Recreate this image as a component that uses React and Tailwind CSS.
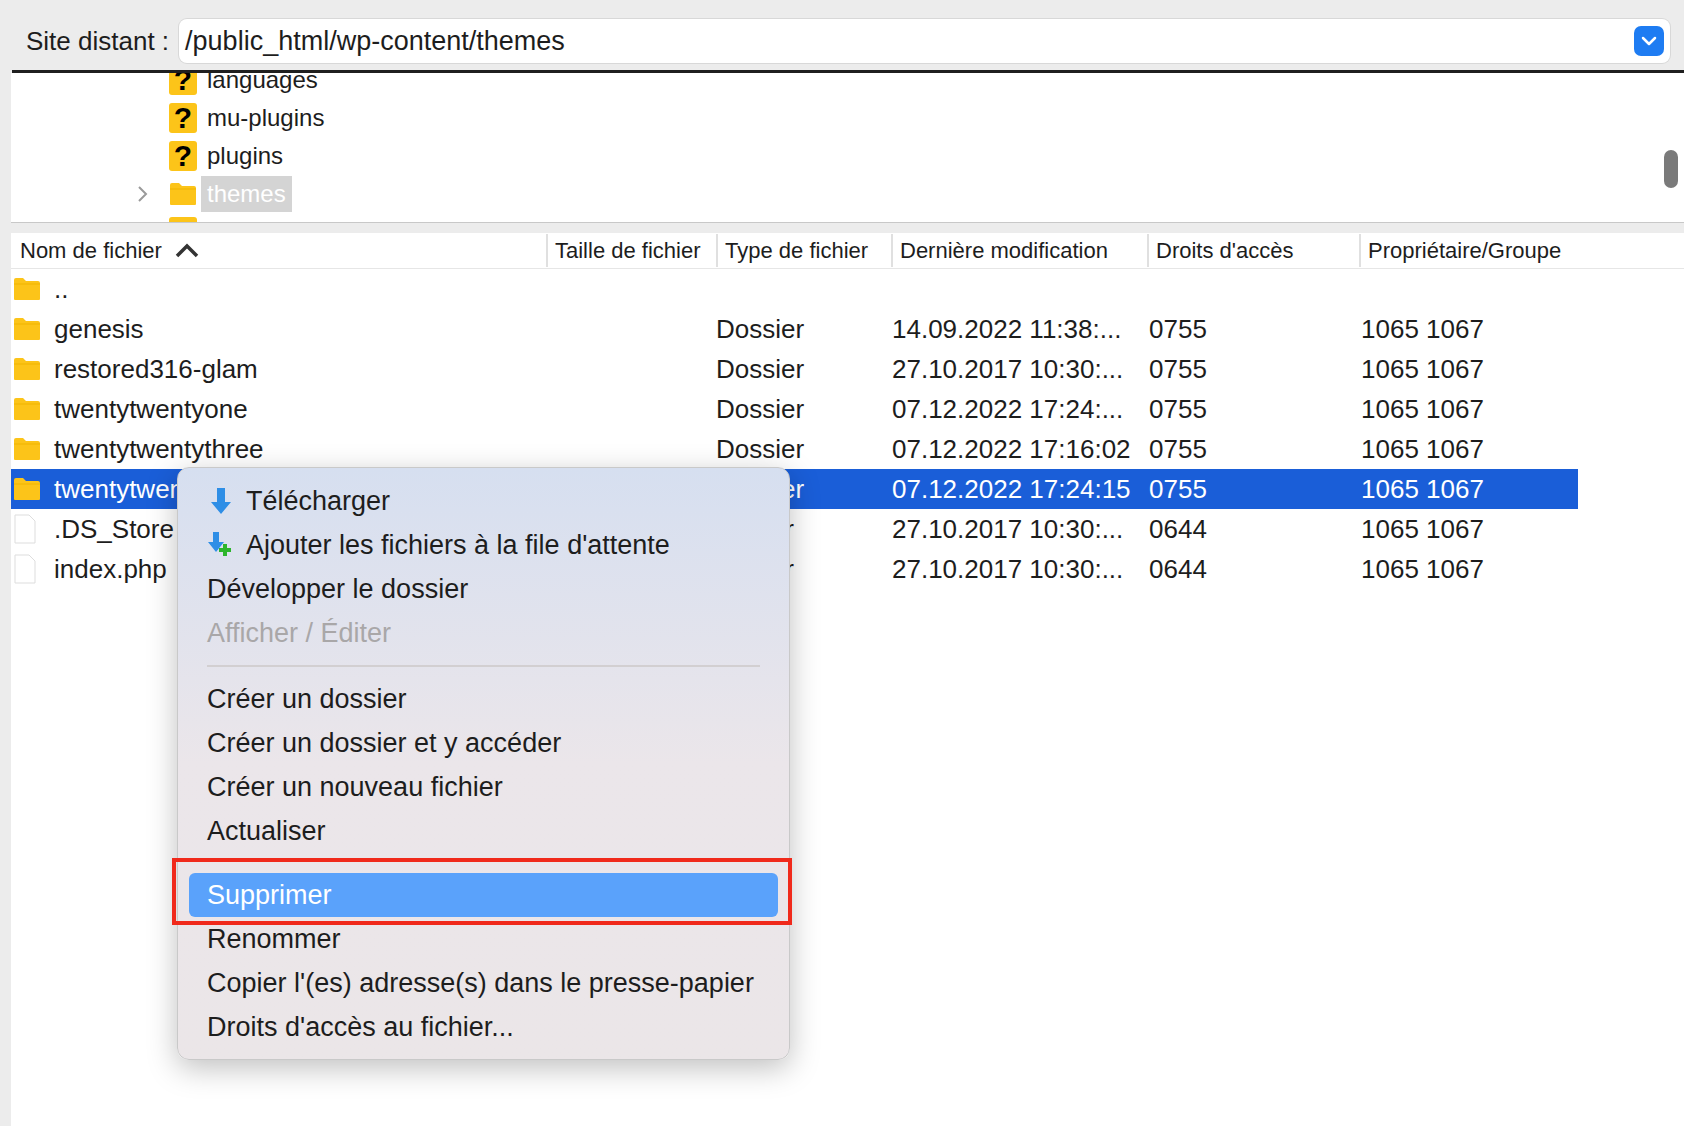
import React from 'react';

const font = { fontFamily: '"Liberation Sans", Arial, sans-serif' };

function Folder({ className = '' }) {
  return (
    <svg width="28" height="24" viewBox="0 0 28 24" className={className}>
      <path d="M1 3 Q1 1 3 1 H10 L13 4 H25 Q27 4 27 6 V22 Q27 23 26 23 H2 Q1 23 1 22 Z" fill="#fcc419" />
      <path d="M1 7 H27" stroke="#f0b400" strokeWidth="1" />
    </svg>
  );
}

function Unknown() {
  return (
    <div className="w-[28px] h-[30px] rounded-[3px] bg-[#fcc419] flex items-center justify-center text-black text-[30px] font-bold leading-none">?</div>
  );
}

function FileIcon() {
  return (
    <svg width="24" height="30" viewBox="0 0 24 30">
      <path d="M2 1 H16 L22 7 V29 H2 Z" fill="#fff" stroke="#ddd" />
    </svg>
  );
}

const rows = [
  { name: '..', icon: 'f' },
  { name: 'genesis', icon: 'f', type: 'Dossier', date: '14.09.2022 11:38:...', perm: '0755', own: '1065 1067' },
  { name: 'restored316-glam', icon: 'f', type: 'Dossier', date: '27.10.2017 10:30:...', perm: '0755', own: '1065 1067' },
  { name: 'twentytwentyone', icon: 'f', type: 'Dossier', date: '07.12.2022 17:24:...', perm: '0755', own: '1065 1067' },
  { name: 'twentytwentythree', icon: 'f', type: 'Dossier', date: '07.12.2022 17:16:02', perm: '0755', own: '1065 1067' },
  { name: 'twentytwentytwo', icon: 'f', type: 'Dossier', date: '07.12.2022 17:24:15', perm: '0755', own: '1065 1067', sel: true },
  { name: '.DS_Store', icon: 'd', type: 'Fichier', date: '27.10.2017 10:30:...', perm: '0644', own: '1065 1067' },
  { name: 'index.php', icon: 'd', type: 'Fichier', date: '27.10.2017 10:30:...', perm: '0644', own: '1065 1067' },
];

export default function App() {
  return (
    <div className="relative w-[1684px] h-[1126px] bg-[#ececec] overflow-hidden text-[#1d1d1d]" style={font}>
      {/* path bar */}
      <div className="h-[73px] flex items-center pr-[14px] gap-[10px] border-b-[3px] border-[#1f1f1f] ml-[12px] pl-[14px] pt-[12px]">
        <span className="text-[26px]">Site distant :</span>
        <div className="flex-1 h-[44px] bg-white rounded-[8px] shadow-[0_0_0_1px_#d8d8d8] flex items-center pl-[6px] pr-[6px]">
          <span className="text-[27px] flex-1">/public_html/wp-content/themes</span>
          <div className="w-[30px] h-[30px] rounded-[7px] bg-[#1e7cf2] flex items-center justify-center">
            <svg width="16" height="10" viewBox="0 0 16 10"><path d="M2 2 L8 8 L14 2" stroke="#fff" strokeWidth="2.5" fill="none" strokeLinecap="round" strokeLinejoin="round" /></svg>
          </div>
        </div>
      </div>
      {/* tree */}
      <div className="ml-[11px] h-[150px] bg-white border-b border-[#c8c8c8] overflow-hidden relative">
        <div className="-mt-[12px]">
          {[['languages', 'q'], ['mu-plugins', 'q'], ['plugins', 'q'], ['themes', 't'], ['', 'q']].map(([n, t], i) => (
            <div key={i} className="h-[38px] flex items-center">
              <div className="w-[158px] flex justify-end pr-[20px]">
                {t === 't' && <svg width="12" height="20" viewBox="0 0 12 20"><path d="M2 3 L9 10 L2 17" stroke="#9a9a9a" strokeWidth="2" fill="none" /></svg>}
              </div>
              {t === 'q' ? <Unknown /> : <Folder />}
              {t === 't' ? (
                <span className="ml-[4px] px-[6px] bg-[#d4d4d4] text-white text-[24px] leading-[36px]">{n}</span>
              ) : (
                <span className="ml-[10px] text-[24px]">{n}</span>
              )}
            </div>
          ))}
        </div>
        <div className="absolute right-[6px] top-[77px] w-[14px] h-[38px] rounded-full bg-[#7a7a7a]" />
      </div>
      {/* list */}
      <div className="ml-[11px] mt-[10px] h-[900px] bg-white">
        <div className="h-[36px] flex items-center text-[22px] border-b border-[#e6e6e6]">
          <div className="w-[535px] pl-[9px] flex items-center gap-[12px]">Nom de fichier
            <svg width="26" height="16" viewBox="0 0 26 16"><path d="M3 13 L13 3 L23 13" stroke="#333" strokeWidth="3.5" fill="none" /></svg>
          </div>
          {[['Taille de fichier', 170], ['Type de fichier', 175], ['Dernière modification', 256], ['Droits d\'accès', 212], ['Propriétaire/Groupe', 212]].map(([h, w]) => (
            <div key={h} className="border-l-2 border-[#e0e0e0] pl-[7px] whitespace-nowrap overflow-hidden" style={{ width: w }}>{h}</div>
          ))}
        </div>
        {rows.map((r) => (
          <div key={r.name} className={`h-[40px] w-[1567px] flex items-center text-[26px] ${r.sel ? 'bg-[#1a5ed8] text-white' : ''}`}>
            <div className="w-[43px] pl-[2px] flex items-center">{r.icon === 'f' ? <Folder /> : <FileIcon />}</div>
            <div className="w-[662px]">{r.name}</div>
            <div className="w-[176px]">{r.type}</div>
            <div className="w-[257px] whitespace-nowrap">{r.date}</div>
            <div className="w-[212px]">{r.perm}</div>
            <div>{r.own}</div>
          </div>
        ))}
      </div>
      {/* context menu */}
      <div className="absolute left-[177px] top-[467px] w-[613px] h-[593px] rounded-[12px] border border-[#c9c9c9] shadow-[0_8px_30px_rgba(0,0,0,0.25)] bg-gradient-to-b from-[#d6dff0] via-[#ebe6ea] to-[#ebe6e8] pt-[11px] text-[27px]">
        <div className="h-[44px] flex items-center pl-[30px] gap-[12px]">
          <svg width="26" height="30" viewBox="0 0 26 30"><path d="M9 2 H17 V16 H23 L13 28 L3 16 H9 Z" fill="#2e8ee6" /></svg>
          Télécharger
        </div>
        <div className="h-[44px] flex items-center pl-[30px] gap-[12px]">
          <svg width="26" height="30" viewBox="0 0 26 30"><path d="M5 2 H11 V12 H16 L8 22 L0 12 H5 Z" fill="#2e8ee6" /><path d="M15 14 H19 V18 H23 V22 H19 V26 H15 V22 H11 V18 H15 Z" fill="#2cb52c" /></svg>
          Ajouter les fichiers à la file d'attente
        </div>
        <div className="h-[44px] flex items-center pl-[29px]">Développer le dossier</div>
        <div className="h-[44px] flex items-center pl-[29px] text-[#a9a7a8]">Afficher / Éditer</div>
        <div className="mx-[29px] my-[10px] border-t-2 border-[#d2cfd1]" />
        <div className="h-[44px] flex items-center pl-[29px]">Créer un dossier</div>
        <div className="h-[44px] flex items-center pl-[29px]">Créer un dossier et y accéder</div>
        <div className="h-[44px] flex items-center pl-[29px]">Créer un nouveau fichier</div>
        <div className="h-[44px] flex items-center pl-[29px]">Actualiser</div>
        <div className="relative mt-[20px]">
          <div className="mx-[11px] h-[44px] rounded-[6px] bg-[#5aa2fb] text-white flex items-center pl-[18px]">Supprimer</div>
          <div className="absolute -left-[6px] -right-[3px] -top-[15px] -bottom-[8px] border-[4px] border-[#f0291b]" />
        </div>
        <div className="h-[44px] flex items-center pl-[29px]">Renommer</div>
        <div className="h-[44px] flex items-center pl-[29px]">Copier l'(es) adresse(s) dans le presse-papier</div>
        <div className="h-[44px] flex items-center pl-[29px]">Droits d'accès au fichier...</div>
      </div>
    </div>
  );
}
